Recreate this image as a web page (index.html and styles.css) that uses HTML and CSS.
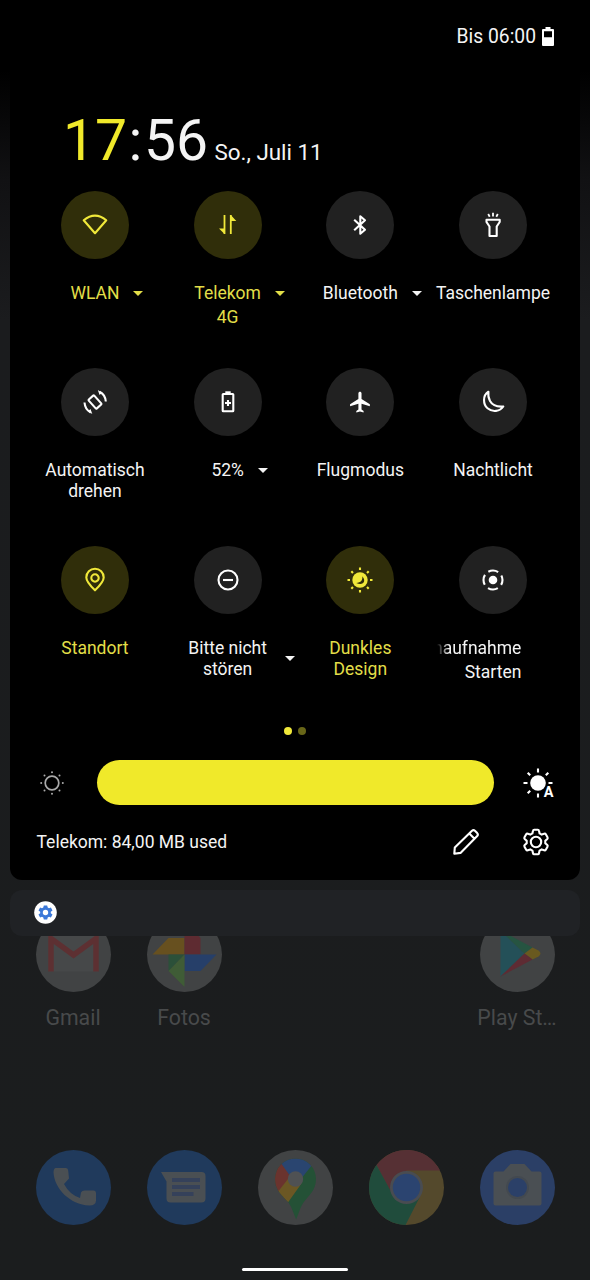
FILE: index.html
```html
<!DOCTYPE html>
<html lang="de">
<head>
<meta charset="utf-8">
<title>Schnelleinstellungen</title>
<link rel="stylesheet" href="styles.css">
</head>
<body>
<div class="phone">
  <header class="status">
    <span class="status-text">Bis 06:00</span>
    <svg class="battery" viewBox="0 0 12 19"><path fill="#fff" fill-rule="evenodd" d="M3.500 0h5v2H11q1 0 1 1v15q0 1-1 1H1q-1 0-1-1V3q0-1 1-1h2.500zM2 4.300v6h8v-6z"/></svg>
  </header>

  <main class="panel">
    <div class="clock"><span class="time"><span class="hour">17</span><span class="colon">:</span><span class="minute">56</span></span><span class="date">So., Juli 11</span></div>

    <section class="tiles">
      <div class="tile on">
        <div class="disc"><svg class="icon" viewBox="-17 -17 34 34"><path class="line" d="M0 8.200-11.300-4.800Q0-14 11.300-4.800Z"/></svg></div>
        <div class="label"><span>WLAN</span><i class="arrow"></i></div>
      </div>
      <div class="tile on">
        <div class="disc"><svg class="icon" viewBox="-17 -17 34 34"><path class="line thin" d="M-3.500-10V9M2.800 9V-10"/><path class="fill" d="M-9 3.500h5.500V9zM2.800-10 8.300-4H2.800z"/></svg></div>
        <div class="label"><span>Telekom</span><i class="arrow"></i></div>
        <div class="sub">4G</div>
      </div>
      <div class="tile">
        <div class="disc"><svg class="icon" viewBox="-17 -17 34 34"><path class="line" d="M-5.800-5.300 5 4.700.3 8.700V-8.700L5-4.700-5.800 5.300"/></svg></div>
        <div class="label"><span>Bluetooth</span><i class="arrow"></i></div>
      </div>
      <div class="tile">
        <div class="disc"><svg class="icon" viewBox="-17 -17 34 34"><path class="line" d="M-6.500-5.300H6.700V-3L3.700 1.500V11H-3.500V1.500L-6.500-3Z"/><path class="line thin" d="M0-12.200v3.700M-4.800-11l1.500 2.700M4.800-11 3.300-8.300"/></svg></div>
        <div class="label"><span>Taschenlampe</span></div>
      </div>

      <div class="tile">
        <div class="disc"><svg class="icon" viewBox="-17 -17 34 34"><rect class="line" x="-6" y="-3.700" width="12" height="7.400" rx=".8" transform="rotate(48)"/><path class="line" d="M4.500-10.300Q10.300-7.500 10.800-.5M-10.500.5Q-10 7.500-4.300 10.500"/><path class="fill" d="M2.800-11.900 7-9.300 4.600-7zM-2.700 11.900-7 9.300-4.500 7z"/></svg></div>
        <div class="label"><span>Automatisch<br>drehen</span></div>
      </div>
      <div class="tile">
        <div class="disc"><svg class="icon" viewBox="-17 -17 34 34"><rect class="line" x="-5.300" y="-8" width="10.600" height="17.300" rx=".5"/><path class="fill" d="M-2.700-10.700h5.400V-8h-5.400z"/><path class="line" d="M-3 1H3M0-2V4"/></svg></div>
        <div class="label"><span>52%</span><i class="arrow"></i></div>
      </div>
      <div class="tile">
        <div class="disc"><svg class="icon" viewBox="-17 -17 34 34"><path class="fill" transform="translate(-12 -12.300) scale(1.040)" d="M21 16v-2l-8-5V3.500c0-.83-.67-1.500-1.500-1.500S10 2.670 10 3.500V9l-8 5v2l8-2.500V19l-2 1.500V22l3.500-1 3.500 1v-1.500L13 19v-5.500l8 2.500z"/></svg></div>
        <div class="label"><span>Flugmodus</span></div>
      </div>
      <div class="tile">
        <div class="disc"><svg class="icon" viewBox="-17 -17 34 34"><path class="line" d="M-4.600-10.300C-10.500-6.500-10 2.500-5.500 6.300-.5 10.500 7 9.500 10.300 4.500 4.500 5-.5 3.500-3-1-4.800-4.200-5-7-4.600-10.300Z"/></svg></div>
        <div class="label"><span>Nachtlicht</span></div>
      </div>

      <div class="tile on">
        <div class="disc"><svg class="icon" viewBox="-17 -17 34 34"><path class="line" d="M0 10.300C-5.500 5-8.700 1.500-8.700-2.500a8.700 8.700 0 0 1 17.400 0C8.700 1.500 5.500 5 0 10.300Z"/><circle class="line" cy="-2" r="3.700"/></svg></div>
        <div class="label"><span>Standort</span></div>
      </div>
      <div class="tile">
        <div class="disc"><svg class="icon" viewBox="-17 -17 34 34"><circle class="line" r="9.500"/><path class="line" d="M-5 0H5"/></svg></div>
        <div class="label wide"><span>Bitte nicht<br>stören</span><i class="arrow"></i></div>
      </div>
      <div class="tile on">
        <div class="disc"><svg class="icon" viewBox="-17 -17 34 34"><circle class="fill" r="7.700"/><path class="cut" d="M2.300-3.800C6.500 1 3.500 6-3.800 3 1 2.500 2.800 0 2.300-3.800Z"/><path class="line" d="M0-12.500v2.500M0 12.500V10M-12.500 0h2.500M12.500 0H10M-8.700-8.700-7-7M8.700-8.700 7-7M-8.700 8.700-7 7M8.700 8.700 7 7"/></svg></div>
        <div class="label"><span>Dunkles<br>Design</span></div>
      </div>
      <div class="tile">
        <div class="disc"><svg class="icon" viewBox="-17 -17 34 34"><circle class="fill" r="4.300"/><circle class="line arcs" r="9.500"/></svg></div>
        <div class="marquee"><span>naufnahme</span></div>
        <div class="sub marquee-sub">Starten</div>
      </div>
    </section>

    <div class="pages"><i class="page current"></i><i class="page"></i></div>

    <div class="brightness">
      <svg class="sun" viewBox="-17 -17 34 34"><circle r="6.800" fill="none" stroke="#aaa" stroke-width="1.700"/><g fill="#aaa"><circle cy="-10.800" r="1"/><circle cy="10.800" r="1"/><circle cx="-10.800" r="1"/><circle cx="10.800" r="1"/><circle cx="-7.500" cy="-7.500" r="1"/><circle cx="7.500" cy="-7.500" r="1"/><circle cx="-7.500" cy="7.500" r="1"/><circle cx="7.500" cy="7.500" r="1"/></g></svg>
      <div class="slider"></div>
      <svg class="auto" viewBox="-17 -17 34 34"><circle class="fill" r="7.800"/><path class="line" d="M0-14.500v4M0 14.500v-4M-14.500 0h4M14.500 0h-4M-10.300-10.300-7.800-7.800M10.300-10.300 7.800-7.800M-10.300 10.300-7.800 7.800"/><text class="auto-letter" x="10.500" y="14.300">A</text></svg>
    </div>

    <footer class="footer">
      <span class="usage">Telekom: 84,00 MB used</span>
      <svg class="edit" viewBox="-17 -17 34 34"><path class="line" d="M-11.700 11.700-11.200 5.500 6-11.200Q7.500-12.500 8.900-11.200L11.200-8.900Q12.500-7.500 11.200-6L-5.500 10.900ZM3.300-8.500 8.500-3.300"/></svg>
      <svg class="gear" viewBox="-17 -17 34 34"><path class="line" d="M-1.800-12.200H1.800Q2.800-12.200 3-11.200L3.600-8.600 5.700-7.400 8.200-8.300Q9.300-8.600 9.800-7.700L11.500-4.700Q12-3.800 11.300-3.100L9.300-1.200V1.200L11.300 3.100Q12 3.800 11.500 4.700L9.800 7.700Q9.300 8.600 8.200 8.300L5.700 7.400 3.600 8.600 3 11.200Q2.800 12.200 1.800 12.200H-1.800Q-2.800 12.200-3 11.200L-3.600 8.600-5.700 7.400-8.200 8.300Q-9.300 8.600-9.800 7.700L-11.500 4.700Q-12 3.800-11.300 3.100L-9.300 1.200V-1.200L-11.300-3.100Q-12-3.800-11.500-4.700L-9.800-7.700Q-9.300-8.600-8.200-8.300L-5.700-7.400-3.600-8.600-3-11.200Q-2.800-12.200-1.800-12.200Z"/><circle class="line" r="5.200"/></svg>
    </footer>
  </main>

  <section class="notice">
    <svg class="notice-icon" viewBox="-11.500 -11.500 23 23"><circle r="11.300" fill="#fff"/><path fill="#3b78d8" fill-rule="evenodd" d="M-1.700-7H1.700L2.200-4.900 3.500-4.200 5.400-4.900 7-2 5.300-.8V.8L7 2 5.400 4.900 3.500 4.200 2.200 4.900 1.700 7H-1.700L-2.200 4.900-3.500 4.200-5.400 4.900-7 2-5.300.8V-.8L-7-2-5.400-4.900-3.500-4.200-2.200-4.900ZM0-2.700A2.700 2.700 0 1 0 0 2.700 2.700 2.700 0 1 0 0-2.700Z"/></svg>
  </section>

  <section class="home">
    <div class="apps">
      <div class="app">
        <svg class="app-icon" viewBox="-37.500 -37.500 75 75"><circle r="37.500" fill="#414344"/><path fill="#4b4d4e" d="M-25-22H25V17H-25z" opacity=".5"/><path d="M-22.500 17V-16L0 .5 22.500-16V17" fill="none" stroke="#5d3032" stroke-width="5.500"/></svg>
        <span>Gmail</span>
      </div>
      <div class="app">
        <svg class="app-icon" viewBox="-37.500 -37.500 75 75"><circle r="37.500" fill="#414344"/><path fill="#67501f" d="M0 0H-32L-16-16.500H0z"/><path fill="#5e2b31" d="M0 0V-33L16-16.500V0z"/><path fill="#263f69" d="M0 0H32L16 16.500H0z"/><path fill="#2b5039" d="M0 0H-16V16.500L0 0z"/><path fill="#3f5c36" d="M0 0V32.500L-16 16.500z"/></svg>
        <span>Fotos</span>
      </div>
      <div class="app"></div>
      <div class="app"></div>
      <div class="app">
        <svg class="app-icon" viewBox="-37.500 -37.500 75 75"><circle r="37.500" fill="#414344"/><path fill="#245058" d="M-17-24V22L7-1z"/><path fill="#265441" d="M-17-24 15-7 7-1z"/><path fill="#69591f" d="M15-7 21-4Q25-1 21 2L15 5 7-1z"/><path fill="#5e2b33" d="M-17 22 15 5 7-1z"/></svg>
        <span>Play St…</span>
      </div>
    </div>
    <div class="apps dock">
      <div class="app"><svg class="app-icon" viewBox="-37.500 -37.500 75 75"><circle r="37.500" fill="#203a5c"/><path fill="#4a4f53" d="M-18-19.500H-7.500Q-5.500-19.500-5.300-17L-4.500-9-9.500-3.500Q-4 7 6.500 10.500L7.500 5Q8.500 3 11 3H20Q22.500 3 22.500 6V13Q22.300 18 16 18C-4 17-19 1-20-15Q-20-19-18-19.500Z"/></svg></div>
      <div class="app"><svg class="app-icon" viewBox="-37.500 -37.500 75 75"><circle r="37.500" fill="#203a5c"/><path fill="#4a4f53" d="M-23.500-15.500H17Q21-15.500 21-11.500V11Q21 15 17 15H-14Q-18 15-18 11V-6Z"/><path stroke="#35415a" stroke-width="4" d="M-12.500-7.500H15.500M-12.500-.5H15.500M-12.500 6.500H9"/></svg></div>
      <div class="app"><svg class="app-icon" viewBox="-37.500 -37.500 75 75"><circle r="37.500" fill="#414344"/><clipPath id="pin"><path d="M0-29A20.500 20.500 0 0 1 20.500-8.500C20.500 3 13 8 8 15 4 21 3 27 .6 32-1.500 27-3 21-7 15-13 8-20.500 3-20.500-8.500A20.500 20.500 0 0 1 0-29Z"/></clipPath><g clip-path="url(#pin)"><path fill="#245136" d="M-25-30H25V35H-25z"/><path fill="#6b5724" d="M-26 12-6-12 6-4-9 17-12 22z"/><path fill="#6a332e" d="M-25-30-14-24 -4-13-22 10z"/><path fill="#2a4570" d="M-15-25-10-35H10L17-23 5-8-5-11z"/></g><circle cy="-8.500" r="7.700" fill="#4f5153"/></svg></div>
      <div class="app"><svg class="app-icon" viewBox="-37.500 -37.500 75 75"><circle r="37.500" fill="#54492c"/><path fill="#563034" d="M-30-22.500A37.500 37.500 0 0 1 33.500-17H0L-16 4z"/><path fill="#204c3c" d="M-30-22.500A37.500 37.500 0 0 0-1 37.500L13 10 0 10-15 5z"/><circle r="16.500" fill="#494c51"/><circle r="13.700" fill="#2b4470"/></svg></div>
      <div class="app"><svg class="app-icon" viewBox="-37.500 -37.500 75 75"><circle r="37.500" fill="#2b3f66"/><path fill="#4a4f53" d="M-22-16H-14L-7-23.500H7L14-16H22Q24-16 24-14V16Q24 18 22 18H-22Q-24 18-24 16V-14Q-24-16-22-16Z"/><circle r="11.500" fill="#434950"/><circle r="9.500" fill="#2b4068"/></svg></div>
    </div>
    <div class="handle"></div>
  </section>
</div>
</body>
</html>
```
FILE: styles.css
```css
* { box-sizing: border-box; }

body {
  margin: 0;
  background: #1b1d1e;
  font-family: Roboto, "Liberation Sans", sans-serif;
  color: #f4f4f4;
}

.phone {
  display: flex;
  flex-direction: column;
  width: 590px;
  height: 1280px;
  overflow: hidden;
  background: linear-gradient(#000 70px, #111113 180px, #1b1c1e 320px, #1b1d1e);
}

svg { display: block; flex: none; overflow: visible; }

.status {
  display: flex;
  justify-content: flex-end;
  align-items: center;
  gap: 6px;
  height: 72px;
  padding-right: 36px;
}
.status-text { font-size: 19.3px; }
.battery { width: 12px; height: 19px; }

.panel {
  display: flex;
  flex-direction: column;
  height: 808px;
  margin: 0 10px;
  border-radius: 0 0 12px 12px;
  background: #000;
}

.clock {
  display: flex;
  align-items: baseline;
  height: 119px;
  padding: 35px 0 0 53px;
  white-space: nowrap;
}
.time { font-size: 57px; line-height: 68px; }
.hour { color: #f0e92a; }
.colon { margin: 0 1.5px; }
.date { margin-left: 6.5px; font-size: 22.4px; }

.tiles {
  display: grid;
  grid-template-columns: repeat(4, 132.7px);
  grid-auto-rows: 177.3px;
  margin-left: 18.6px;
}
.tile {
  display: flex;
  flex-direction: column;
  align-items: center;
  font-size: 17.5px;
  line-height: 21px;
  text-align: center;
}
.disc {
  display: flex;
  justify-content: center;
  align-items: center;
  width: 68px;
  height: 68px;
  margin-bottom: 24px;
  border-radius: 50%;
  background: #212121;
}
.icon, .auto, .edit, .gear, .sun { width: 34px; height: 34px; }
.line { fill: none; stroke: #fff; stroke-width: 2.1; stroke-linejoin: round; }
.thin { stroke-width: 1.8; }
.fill { fill: #fff; }
.arcs { stroke-dasharray: 10.3 4.623; stroke-dashoffset: 5.15; }

.on { color: #e2de48; }
.on .disc { background: #302e0a; }
.on .line { stroke: #f0e83a; }
.on .fill { fill: #f0e83a; }
.cut { fill: #302e0a; }

.label { display: flex; align-items: center; white-space: nowrap; }
.arrow {
  margin: 0 -24px 0 14px;
  border: 5px solid transparent;
  border-top-color: currentColor;
  border-bottom: 0;
}
.wide .arrow { margin: 0 -28px 0 18px; }
.sub { margin-top: 3px; }
.marquee {
  display: flex;
  align-self: flex-end;
  justify-content: flex-end;
  width: 84px;
  margin-right: 38px;
  overflow: hidden;
  -webkit-mask-image: linear-gradient(90deg, transparent, #000 12px);
  mask-image: linear-gradient(90deg, transparent, #000 12px);
}
.marquee-sub { align-self: flex-end; margin-right: 38px; }

.pages {
  display: flex;
  justify-content: center;
  gap: 6px;
  margin-top: 3.7px;
}
.page { width: 8px; height: 8px; border-radius: 50%; background: #686618; }
.current { background: #f0e83a; }

.brightness {
  display: flex;
  align-items: center;
  height: 44px;
  margin-top: 26px;
  padding-left: 24.5px;
}
.slider {
  width: 397px;
  height: 44.5px;
  margin: 0 27.2px 0 28px;
  border-radius: 22.5px;
  background: #f0e92a;
}
.auto-letter { fill: #fff; font-size: 14.5px; font-weight: 700; text-anchor: middle; stroke: #000; stroke-width: 2px; paint-order: stroke; }

.footer {
  display: flex;
  align-items: center;
  height: 34px;
  margin-top: 20px;
  padding: 0 27px 0 26.5px;
}
.usage { flex: 1; font-size: 17.5px; white-space: nowrap; }
.gear { margin-left: 36.5px; }

.notice {
  display: flex;
  align-items: center;
  height: 46.5px;
  margin: 9.5px 10px 0;
  padding-left: 23.5px;
  border-radius: 12px;
  background: #202225;
}
.notice-icon { width: 23px; height: 23px; }

.home {
  display: flex;
  flex: 1;
  flex-direction: column;
  align-items: center;
  overflow: hidden;
}
.apps {
  display: grid;
  grid-template-columns: repeat(5, 111px);
  height: 233px;
  margin-top: -19.5px;
}
.app {
  display: flex;
  flex-direction: column;
  align-items: center;
  gap: 13px;
  color: #484a4b;
  font-size: 21.3px;
  line-height: 26px;
  white-space: nowrap;
}
.app-icon { width: 75px; height: 75px; }
.dock { height: 118px; margin-top: 0; }
.handle { width: 106px; height: 3.5px; border-radius: 2px; background: #fff; }
```
